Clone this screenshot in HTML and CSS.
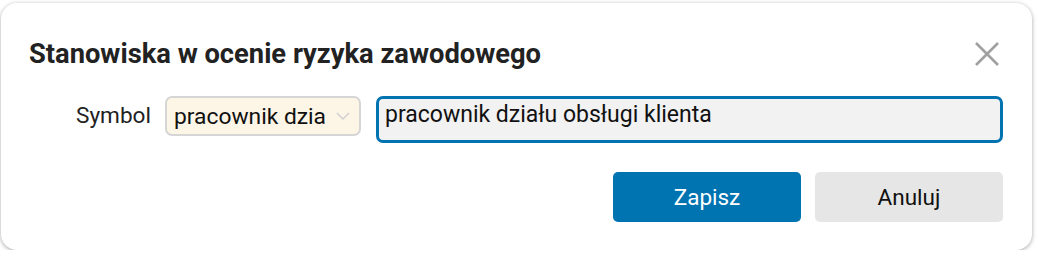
FILE: index.html
```html
<!DOCTYPE html>
<html lang="pl">

<head>
    <title>Stanowiska</title>
    <meta charset="utf-8">
    <link rel="stylesheet" href="styles.css">
</head>

<body>

    <section class="okno">
        <header class="okno-top">
            <h2>Stanowiska w ocenie ryzyka zawodowego</h2>
            <button class="zamknij" aria-label="Zamknij">
                <svg width="26" height="26" viewBox="0 0 26 26">
                    <path d="M2 2 L24 24 M24 2 L2 24" stroke="#a0a0a0" stroke-width="2.6" fill="none"/>
                </svg>
            </button>
        </header>

        <div class="wiersz">
            <label class="etykieta">Symbol</label>
            <div class="wybor">
                <span>pracownik dzia</span>
                <svg width="14" height="8" viewBox="0 0 14 8">
                    <path d="M1 1 L7 7 L13 1" stroke="#cfcfcf" stroke-width="1.4" fill="none"/>
                </svg>
            </div>
            <input class="pole" type="text" value="pracownik działu obsługi klienta">
        </div>

        <footer class="przyciski">
            <button class="btn zapisz">Zapisz</button>
            <button class="btn anuluj">Anuluj</button>
        </footer>
    </section>

</body>

</html>
```

FILE: styles.css
```css
body {
    margin: 0;
    background-color: #ffffff;
    font-family: Roboto, "Liberation Sans", sans-serif;
    color: #222222;
}

.okno {
    box-sizing: border-box;
    width: 1031px;
    height: 247px;
    margin: 3px 0 0 1px;
    background-color: #ffffff;
    border-radius: 16px;
    box-shadow: 0 1px 4px rgba(0, 0, 0, 0.35);
    padding: 0 29px 0 28px;
}

.okno-top {
    display: flex;
    align-items: center;
    justify-content: space-between;
    height: 93px;
    padding-top: 9px;
    box-sizing: border-box;
}

.okno-top h2 {
    margin: 0;
    font-size: 27.3px;
    font-weight: 700;
    color: #222222;
}

.zamknij {
    background: none;
    border: none;
    padding: 0;
    margin-right: 3px;
    width: 26px;
    height: 26px;
    cursor: pointer;
}

.wiersz {
    display: flex;
    align-items: flex-start;
}

.etykieta {
    width: 77px;
    font-size: 22.6px;
    margin: 6px 12px 0 47px;
    white-space: nowrap;
}

.wybor {
    box-sizing: border-box;
    width: 196px;
    height: 40px;
    display: flex;
    align-items: center;
    justify-content: space-between;
    padding: 0 9px 0 7px;
    background-color: #fdf5e6;
    border: 2px solid #d6d6d6;
    border-radius: 7px;
    font-size: 22.8px;
    color: #111111;
}

.pole {
    box-sizing: border-box;
    width: 627px;
    height: 47px;
    margin-left: 15px;
    padding: 0 0 10px 6px;
    border: 3px solid #0073b0;
    border-radius: 7px;
    background-color: #f2f2f2;
    font-family: inherit;
    font-size: 23px;
    color: #111111;
    outline: none;
}

.przyciski {
    display: flex;
    justify-content: flex-end;
    gap: 14px;
    margin-top: 29px;
}

.btn {
    width: 188px;
    height: 50px;
    border: none;
    border-radius: 5px;
    font-family: inherit;
    font-size: 22.5px;
    cursor: pointer;
}

.zapisz {
    background-color: #0073b1;
    color: #ffffff;
}

.anuluj {
    background-color: #e6e6e6;
    color: #111111;
}
```
